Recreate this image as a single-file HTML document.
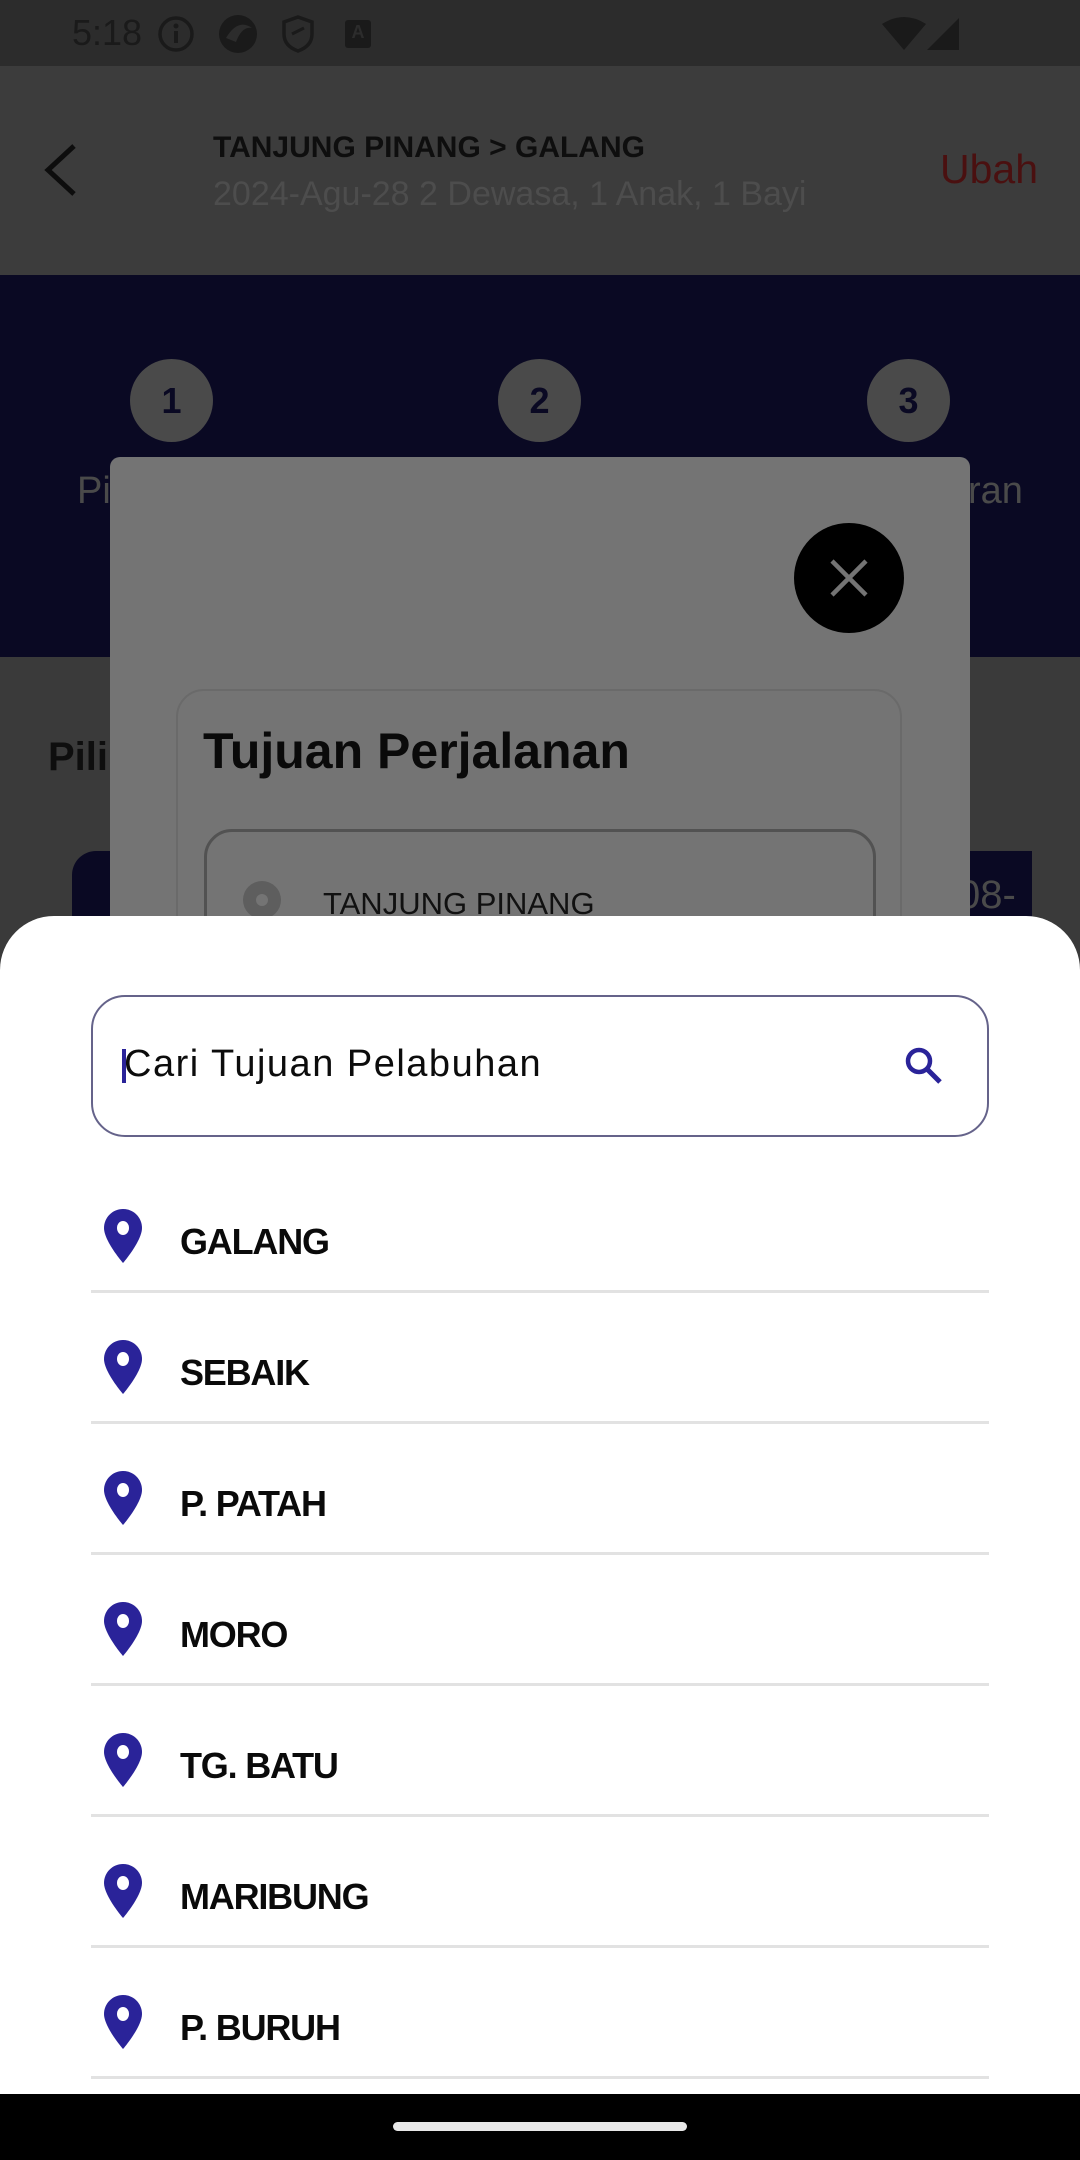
<!DOCTYPE html>
<html><head><meta charset="utf-8"><style>
*{margin:0;padding:0;box-sizing:border-box}
body{width:1080px;height:2160px;position:relative;overflow:hidden;background:#3a3a3a;font-family:"Liberation Sans",sans-serif}
.abs{position:absolute}
.item{position:absolute;left:91px;width:898px;height:131px}
.item .t{position:absolute;left:89px;top:0;line-height:1;font-size:36px;font-weight:bold;color:#0a0a0a;letter-spacing:-1.2px}
.item svg{position:absolute;left:12px}
.div{position:absolute;left:91px;width:898px;height:3px;background:#e2e2e2}
</style></head><body>
<div class="abs" style="left:0;top:0;width:1080px;height:66px;background:#2c2c2c"></div>
<div class="abs" style="left:72px;top:12px;font-size:36px;color:#1a1a1a">5:18</div>
<svg class="abs" style="left:156px;top:14px" width="40" height="40" viewBox="0 0 40 40"><circle cx="20" cy="20" r="16" fill="none" stroke="#1a1a1a" stroke-width="3.5"/><rect x="18" y="17" width="4" height="12" fill="#1a1a1a"/><circle cx="20" cy="12" r="2.5" fill="#1a1a1a"/></svg>
<svg class="abs" style="left:216px;top:12px" width="44" height="44" viewBox="0 0 44 44"><circle cx="22" cy="22" r="19" fill="#1a1a1a"/><path d="M10 26 Q22 6 36 16 Q26 14 20 30Z" fill="#2c2c2c"/></svg>
<svg class="abs" style="left:280px;top:14px" width="36" height="40" viewBox="0 0 36 40"><path d="M18 3 L32 8 V20 Q32 32 18 37 Q4 32 4 20 V8Z" fill="none" stroke="#1a1a1a" stroke-width="3.5"/><path d="M12 20 L24 14" stroke="#1a1a1a" stroke-width="3"/></svg>
<div class="abs" style="left:345px;top:20px;width:26px;height:28px;background:#1a1a1a;border-radius:3px;color:#2c2c2c;font-size:18px;font-weight:bold;text-align:center;line-height:24px">A</div>
<svg class="abs" style="left:880px;top:16px" width="80" height="36" viewBox="0 0 80 36"><path d="M2 8 Q24 -6 46 8 L24 34Z" fill="#1a1a1a"/><path d="M79 2 V34 H47Z" fill="#1a1a1a"/></svg>
<div class="abs" style="left:0;top:66px;width:1080px;height:209px;background:#3c3c3c"></div>
<svg class="abs" style="left:38px;top:142px" width="44" height="56" viewBox="0 0 44 56"><path d="M36 4 L10 28 L36 52" fill="none" stroke="#0d0d0d" stroke-width="5"/></svg>
<div class="abs" style="left:213px;top:131px;font-size:30px;font-weight:bold;color:#0e0e0e;letter-spacing:0px">TANJUNG PINANG &gt; GALANG</div>
<div class="abs" style="left:213px;top:175px;font-size:34px;color:#4d4d4d">2024-Agu-28 2 Dewasa, 1 Anak, 1 Bayi</div>
<div class="abs" style="left:940px;top:146px;font-size:41px;color:#4a1010">Ubah</div>
<div class="abs" style="left:0;top:275px;width:1080px;height:382px;background:#0a0923"></div>
<div class="abs" style="left:130px;top:359px;width:83px;height:83px;border-radius:50%;background:#4a4a4a;color:#0a0923;font-size:36px;font-weight:bold;text-align:center;line-height:83px">1</div>
<div class="abs" style="left:498px;top:359px;width:83px;height:83px;border-radius:50%;background:#4a4a4a;color:#0a0923;font-size:36px;font-weight:bold;text-align:center;line-height:83px">2</div>
<div class="abs" style="left:867px;top:359px;width:83px;height:83px;border-radius:50%;background:#4a4a4a;color:#0a0923;font-size:36px;font-weight:bold;text-align:center;line-height:83px">3</div>
<div class="abs" style="left:77px;top:470px;font-size:38px;color:#4a4a4a">Pi</div>
<div class="abs" style="left:968px;top:470px;font-size:38px;color:#4a4a4a">ran</div>
<div class="abs" style="left:48px;top:735px;font-size:40px;font-weight:bold;color:#0e0e0e">Pilih</div>
<div class="abs" style="left:72px;top:851px;width:960px;height:80px;background:#0a0923;border-radius:24px 0 0 0"></div>
<div class="abs" style="left:958px;top:873px;font-size:40px;color:#4a4a4a">08-</div>
<div class="abs" style="left:110px;top:457px;width:860px;height:480px;background:#747474;border-radius:10px"></div>
<div class="abs" style="left:794px;top:523px;width:110px;height:110px;border-radius:50%;background:#000"></div>
<svg class="abs" style="left:829px;top:558px" width="40" height="40" viewBox="0 0 40 40"><path d="M3 3L37 37M37 3L3 37" stroke="#747474" stroke-width="4.5"/></svg>
<div class="abs" style="left:176px;top:689px;width:726px;height:300px;border:2px solid #6a6a6a;border-radius:28px"></div>
<div class="abs" style="left:203px;top:722px;font-size:50px;font-weight:bold;color:#0a0a0a;letter-spacing:0px">Tujuan Perjalanan</div>
<div class="abs" style="left:204px;top:829px;width:672px;height:200px;border:3px solid #525252;border-radius:28px"></div>
<div class="abs" style="left:243px;top:881px;width:38px;height:38px;border-radius:50%;background:#5e5e5e"></div>
<div class="abs" style="left:256px;top:894px;width:12px;height:12px;border-radius:50%;background:#747474"></div>
<div class="abs" style="left:323px;top:886px;font-size:31px;color:#111">TANJUNG PINANG</div>
<div class="abs" style="left:0;top:916px;width:1080px;height:1200px;background:#fff;border-radius:54px 54px 0 0"></div>
<div class="abs" style="left:91px;top:995px;width:898px;height:142px;border:2.5px solid #65638a;border-radius:34px"></div>
<div class="abs" style="left:122px;top:1049px;width:4px;height:34px;background:#2a2399"></div>
<div class="abs" style="left:124px;top:1043px;font-size:38px;color:#0c0c0c;letter-spacing:1.5px">Cari Tujuan Pelabuhan</div>
<svg class="abs" style="left:902px;top:1044px" width="44" height="44" viewBox="0 0 44 44"><circle cx="17" cy="17" r="11" fill="none" stroke="#2a2399" stroke-width="4.5"/><path d="M25 25L38 38" stroke="#2a2399" stroke-width="5"/></svg>

<div class="item" style="top:1208px"><svg style="top:0" width="40" height="56" viewBox="0 0 40 56"><path d="M20 1C9.5 1 1 9.5 1 20c0 13 19 35 19 35s19-22 19-35C39 9.5 30.5 1 20 1z" fill="#2a2399"/><ellipse cx="20" cy="20" rx="6" ry="7" fill="#fff"/></svg><div class="t" style="top:16px">GALANG</div></div>
<div class="div" style="top:1290px"></div>
<div class="item" style="top:1339px"><svg style="top:0" width="40" height="56" viewBox="0 0 40 56"><path d="M20 1C9.5 1 1 9.5 1 20c0 13 19 35 19 35s19-22 19-35C39 9.5 30.5 1 20 1z" fill="#2a2399"/><ellipse cx="20" cy="20" rx="6" ry="7" fill="#fff"/></svg><div class="t" style="top:16px">SEBAIK</div></div>
<div class="div" style="top:1421px"></div>
<div class="item" style="top:1470px"><svg style="top:0" width="40" height="56" viewBox="0 0 40 56"><path d="M20 1C9.5 1 1 9.5 1 20c0 13 19 35 19 35s19-22 19-35C39 9.5 30.5 1 20 1z" fill="#2a2399"/><ellipse cx="20" cy="20" rx="6" ry="7" fill="#fff"/></svg><div class="t" style="top:16px">P. PATAH</div></div>
<div class="div" style="top:1552px"></div>
<div class="item" style="top:1601px"><svg style="top:0" width="40" height="56" viewBox="0 0 40 56"><path d="M20 1C9.5 1 1 9.5 1 20c0 13 19 35 19 35s19-22 19-35C39 9.5 30.5 1 20 1z" fill="#2a2399"/><ellipse cx="20" cy="20" rx="6" ry="7" fill="#fff"/></svg><div class="t" style="top:16px">MORO</div></div>
<div class="div" style="top:1683px"></div>
<div class="item" style="top:1732px"><svg style="top:0" width="40" height="56" viewBox="0 0 40 56"><path d="M20 1C9.5 1 1 9.5 1 20c0 13 19 35 19 35s19-22 19-35C39 9.5 30.5 1 20 1z" fill="#2a2399"/><ellipse cx="20" cy="20" rx="6" ry="7" fill="#fff"/></svg><div class="t" style="top:16px">TG. BATU</div></div>
<div class="div" style="top:1814px"></div>
<div class="item" style="top:1863px"><svg style="top:0" width="40" height="56" viewBox="0 0 40 56"><path d="M20 1C9.5 1 1 9.5 1 20c0 13 19 35 19 35s19-22 19-35C39 9.5 30.5 1 20 1z" fill="#2a2399"/><ellipse cx="20" cy="20" rx="6" ry="7" fill="#fff"/></svg><div class="t" style="top:16px">MARIBUNG</div></div>
<div class="div" style="top:1945px"></div>
<div class="item" style="top:1994px"><svg style="top:0" width="40" height="56" viewBox="0 0 40 56"><path d="M20 1C9.5 1 1 9.5 1 20c0 13 19 35 19 35s19-22 19-35C39 9.5 30.5 1 20 1z" fill="#2a2399"/><ellipse cx="20" cy="20" rx="6" ry="7" fill="#fff"/></svg><div class="t" style="top:16px">P. BURUH</div></div>
<div class="div" style="top:2076px"></div>
<div class="abs" style="left:0;top:2094px;width:1080px;height:66px;background:#000"></div>
<div class="abs" style="left:393px;top:2122px;width:294px;height:9px;border-radius:5px;background:#e8e8e8"></div>
</body></html>
